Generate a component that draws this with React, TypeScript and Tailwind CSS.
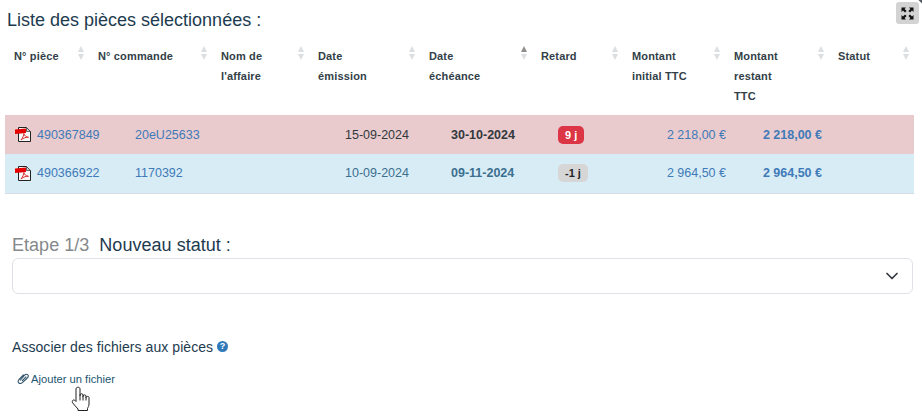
import React from 'react'

const font = { fontFamily: '"Liberation Sans", Arial, sans-serif' }

function SortArrows({ active = false }: { active?: boolean }) {
    return (
        <span className="absolute top-[9px] right-[5px] flex flex-col items-center gap-[2px]">
            <span className={`w-0 h-0 border-x-[3.5px] border-x-transparent border-b-[6px] ${active ? 'border-b-[#8f8f8f]' : 'border-b-[#dcdfe2]'}`} />
            <span className="w-0 h-0 border-x-[3.5px] border-x-transparent border-t-[6px] border-t-[#dcdfe2]" />
        </span>
    )
}

function PdfIcon() {
    return (
        <svg width="17" height="17" viewBox="0 0 17 17" className="shrink-0">
            <path d="M3.5 1.5H11.5L15.5 5.5V15.5H3.5Z" fill="#fafafa" stroke="#222" strokeWidth="1" />
            <path d="M11.5 1.5V5.5H15.5Z" fill="#cfcfcf" stroke="#444" strokeWidth="0.8" />
            <path d="M0 3.5L11 2.5V7L0 8Z" fill="#e60000" />
            <path d="M6 14C7.5 12 9 9.5 8.8 7.5C9.5 9.8 11 11 13.5 11.3C11.5 11 8.5 11.8 6 14Z" fill="none" stroke="#d83030" strokeWidth="1" />
        </svg>
    )
}

function ExpandIcon() {
    return (
        <svg width="13" height="13" viewBox="0 0 13 13">
            <path d="M0.5 0.5H5L3.6 2L5.6 4L4 5.6L2 3.6L0.5 5Z" fill="#111" />
            <path d="M12.5 0.5H8L9.4 2L7.4 4L9 5.6L11 3.6L12.5 5Z" fill="#111" />
            <path d="M0.5 12.5H5L3.6 11L5.6 9L4 7.4L2 9.4L0.5 8Z" fill="#111" />
            <path d="M12.5 12.5H8L9.4 11L7.4 9L9 7.4L11 9.4L12.5 8Z" fill="#111" />
        </svg>
    )
}

function Clip() {
    return (
        <svg width="12" height="11" viewBox="0 0 12 11" fill="none" stroke="#33566b" strokeWidth="1.1" className="shrink-0">
            <path d="M3 7.5L7.6 2.2C8.6 1.1 10 1 10.8 1.8C11.6 2.6 11.3 3.9 10.3 5L5.4 9.6C4.2 10.6 2.6 10.7 1.7 9.9C0.8 9.1 1 7.6 2 6.5L6.7 1.6" />
            <path d="M5 8L9.3 3.6" />
        </svg>
    )
}

function HandCursor() {
    return (
        <svg width="20" height="26" viewBox="0 0 20 26" className="absolute left-[71px] top-[386px]">
            <path
                d="M5 15.5V3C5 0.6 9 0.6 9 3V10V9C9 7.3 12 7.3 12 9V11V10C12 8.5 15 8.5 15 10V12V11.5C15 10 18 10 18 11.5V18C18 20 17 21 16.5 22.5V24.5H7V23C5 21 3.5 19 1.8 17C0.3 15 2.2 13.2 3.8 14.3Z"
                fill="#fff"
                stroke="#222"
                strokeWidth="1"
                strokeLinejoin="round"
            />
            <path d="M9 10V14.5M12 11V14.5M15 12V14.5" stroke="#222" strokeWidth="1" />
        </svg>
    )
}

export default function App() {
    return (
        <main className="relative w-[922px] h-[416px] overflow-hidden bg-white text-[#1d3b4f]" style={font}>
            <div className="relative h-[37px] pl-[7px] pt-[9px]">
                <h2 className="text-[18px] leading-[22px] font-normal">Liste des pièces sélectionnées :</h2>
                <button className="absolute left-[896px] top-[2px] w-[23px] h-[22px] rounded-[3px] bg-[#d3d3d3] flex items-center justify-center">
                    <ExpandIcon />
                </button>
                <span className="absolute left-[918px] top-[-1px] w-[6px] h-[3px] rotate-45 bg-[#555b60]" />
            </div>

            <div className="pl-[5px]">
                <table className="table-fixed border-collapse w-[909px]">
                    <colgroup>
                        <col className="w-[84px]" />
                        <col className="w-[123px]" />
                        <col className="w-[97px]" />
                        <col className="w-[111px]" />
                        <col className="w-[112px]" />
                        <col className="w-[91px]" />
                        <col className="w-[102px]" />
                        <col className="w-[104px]" />
                        <col className="w-[85px]" />
                    </colgroup>
                    <thead>
                        <tr className="h-[78px] align-top text-left text-[11px] leading-[20px] font-bold text-[#333f48] tracking-[0.15px]">
                            <th className="pl-[9px] pt-[9px] relative"><span className="block">N° pièce</span><SortArrows /></th>
                            <th className="pl-[9px] pt-[9px] relative"><span className="block">N° commande</span><SortArrows /></th>
                            <th className="pl-[9px] pt-[9px] relative"><span className="block">Nom de<br />l'affaire</span><SortArrows /></th>
                            <th className="pl-[9px] pt-[9px] relative"><span className="block">Date<br />émission</span><SortArrows /></th>
                            <th className="pl-[9px] pt-[9px] relative"><span className="block">Date<br />échéance</span><SortArrows active /></th>
                            <th className="pl-[9px] pt-[9px] relative"><span className="block">Retard</span><SortArrows /></th>
                            <th className="pl-[9px] pt-[9px] relative"><span className="block">Montant<br />initial TTC</span><SortArrows /></th>
                            <th className="pl-[9px] pt-[9px] relative"><span className="block">Montant<br />restant<br />TTC</span><SortArrows /></th>
                            <th className="pl-[9px] pt-[9px] relative"><span className="block">Statut</span><SortArrows /></th>
                        </tr>
                    </thead>
                    <tbody className="text-[12.5px] leading-[20px]">
                        <tr className="h-[39px] bg-[#e9cbce] text-[#33383d]">
                            <td className="pl-[10px]">
                                <div className="flex items-center gap-[5px] text-[#3f7ab8]"><PdfIcon />490367849</div>
                            </td>
                            <td className="pl-[46px] text-[#3f7ab8]">20eU25633</td>
                            <td />
                            <td className="pl-[36px]">15-09-2024</td>
                            <td className="pl-[31px] font-bold">30-10-2024</td>
                            <td className="pl-[26px]">
                                <span className="inline-flex items-center h-[18px] px-[7px] rounded-[5px] bg-[#dc3545] text-white text-[11px] font-bold">9 j</span>
                            </td>
                            <td className="text-right text-[#3f7ab8]"><span className="inline-block -mr-[1px]">2 218,00 €</span></td>
                            <td className="pr-[7px] text-right font-bold text-[#3f7ab8]">2 218,00 €</td>
                            <td />
                        </tr>
                        <tr className="h-[39px] bg-[#d8ecf6] border-b border-[#d5dde2] text-[#3b6f8e]">
                            <td className="pl-[10px]">
                                <div className="flex items-center gap-[5px] text-[#3f7ab8]"><PdfIcon />490366922</div>
                            </td>
                            <td className="pl-[46px] text-[#3f7ab8]">1170392</td>
                            <td />
                            <td className="pl-[36px]">10-09-2024</td>
                            <td className="pl-[31px] font-bold">09-11-2024</td>
                            <td className="pl-[26px]">
                                <span className="inline-flex items-center h-[18px] px-[7px] rounded-[5px] bg-[#d6d6d6] text-[#222] text-[11px] font-bold">-1 j</span>
                            </td>
                            <td className="text-right text-[#3f7ab8]"><span className="inline-block -mr-[1px]">2 964,50 €</span></td>
                            <td className="pr-[7px] text-right font-bold text-[#3f7ab8]">2 964,50 €</td>
                            <td />
                        </tr>
                    </tbody>
                </table>
            </div>

            <div className="pl-[12px] pr-[9px] pt-[39px]">
                <div className="text-[18px] leading-[24px] h-[24px] tracking-[0.03px]">
                    <span className="text-[#85898c]">Etape 1/3</span>
                    <span className="ml-[10px]">Nouveau statut :</span>
                </div>
                <div className="mt-[1px] h-[36px] border border-[#dee2e6] rounded-[6px] flex items-center justify-end pr-[13px]">
                    <svg width="14" height="10" viewBox="0 0 14 10" fill="none" stroke="#343a40" strokeWidth="1.7" strokeLinecap="round" strokeLinejoin="round">
                        <path d="M2 2.5L7 7.5L12 2.5" />
                    </svg>
                </div>
                <div className="mt-[43px] flex items-center gap-[4px] text-[14px] leading-[20px] tracking-[0.06px]">
                    Associer des fichiers aux pièces
                    <span className="w-[11px] h-[11px] rounded-full bg-[#2f79b9] text-white text-[9px] leading-[11px] font-bold text-center">?</span>
                </div>
                <div className="mt-[13px] pl-[5px] flex items-center gap-[2px] text-[11.2px] leading-[18px] text-[#1d5570]">
                    <Clip />
                    Ajouter un fichier
                </div>
            </div>

            <HandCursor />
        </main>
    )
}
